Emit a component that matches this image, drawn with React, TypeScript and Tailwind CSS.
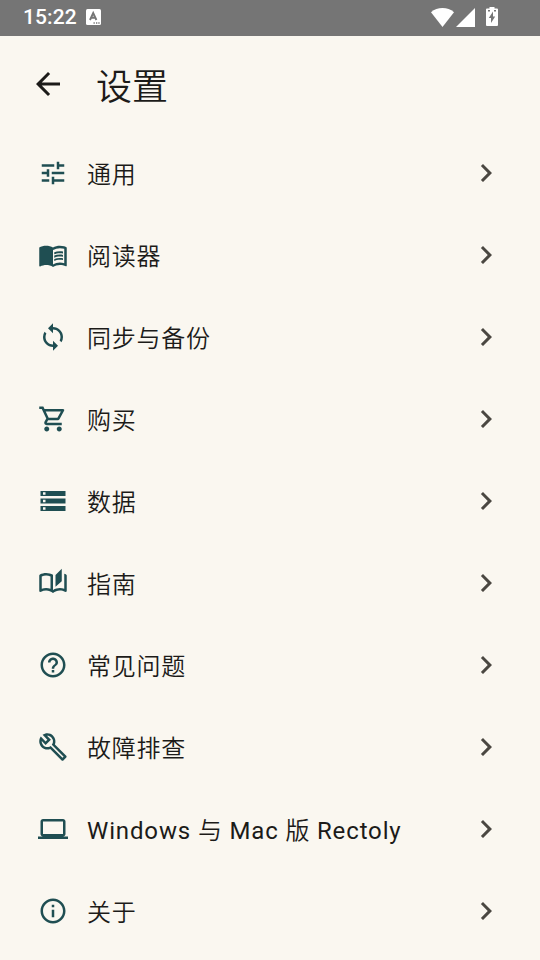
import type { IconType } from 'react-icons';
import {
  MdArrowBack,
  MdChevronRight,
  MdHelpOutline,
  MdInfoOutline,
  MdLaptop,
  MdMenuBook,
  MdOutlineAutoStories,
  MdOutlineBuild,
  MdOutlineShoppingCart,
  MdStorage,
  MdSync,
  MdTune,
} from 'react-icons/md';

const items: { label: string; Icon: IconType }[] = [
  { label: '通用', Icon: MdTune },
  { label: '阅读器', Icon: MdMenuBook },
  { label: '同步与备份', Icon: MdSync },
  { label: '购买', Icon: MdOutlineShoppingCart },
  { label: '数据', Icon: MdStorage },
  { label: '指南', Icon: MdOutlineAutoStories },
  { label: '常见问题', Icon: MdHelpOutline },
  { label: '故障排查', Icon: MdOutlineBuild },
  { label: 'Windows 与 Mac 版 Rectoly', Icon: MdLaptop },
  { label: '关于', Icon: MdInfoOutline },
];

// Latin runs use the regular weight, Chinese runs the lighter one.
function Label({ text }: { text: string }) {
  return (
    <span className="ml-[19px] mt-1 whitespace-pre text-[24px] font-[350] leading-9 tracking-[0.75px]">
      {text.split(/([A-Za-z ]+)/).filter(Boolean).map((run, i) =>
        /[A-Za-z]/.test(run) ? (
          <span key={i} className="font-normal tracking-[0.86px]">{run}</span>
        ) : (
          run
        ),
      )}
    </span>
  );
}

function StatusBar() {
  return (
    <div className="flex h-9 items-center bg-[#757575] pl-[23px] pr-[42px] text-white">
      <span className="text-[21px] font-medium leading-9 -mt-0.5 tracking-[0.1px]">15:22</span>
      <svg className="ml-[9px] -mt-0.5" width="15" height="16" viewBox="0 0 15 16">
        <rect width="15" height="16" rx="1.5" fill="#fff" />
        <path d="M4 11 7.200 4l3.200 7M5 8.700h4.500" fill="none" stroke="#757575" strokeWidth="1.900" />
        <path d="M7.500 14h1.300M10 14h1.300M12.300 14h1.300" stroke="#757575" strokeWidth="1.300" />
      </svg>
      <div className="-mt-0.5 ml-auto flex items-center">
        <svg width="23" height="20" viewBox="0 0 23 20">
          <path d="M0 5.200Q5 1 11.500 1T23 5.200L11.500 20Z" fill="#fff" />
        </svg>
        <svg className="ml-[2px]" width="19" height="20" viewBox="0 0 19 20">
          <path d="M19 1v19H0Z" fill="#fff" />
        </svg>
        <svg className="ml-[11px]" width="12" height="20" viewBox="0 0 12 20">
          <path d="M3.500 0h5v1.500H11a1 1 0 0 1 1 1V18a1 1 0 0 1-1 1H1a1 1 0 0 1-1-1V2.500a1 1 0 0 1 1-1h2.500Z" fill="#fff" />
          <path d="M7 4.500v5h2.200L5 16v-5H2.800ZM2 3h2v1.500H2ZM8 3h2v1.500H8Z" fill="#757575" />
        </svg>
      </div>
    </div>
  );
}

export default function App() {
  return (
    <div className="flex h-[960px] w-[540px] flex-col overflow-hidden bg-[#faf7f0] font-['Roboto','Noto_Sans_CJK_SC',sans-serif] text-[#1c1b19]">
      <StatusBar />
      <header className="flex h-24 items-center pl-[30px]">
        <MdArrowBack size={36} />
        <h1 className="ml-[30px] mt-2 text-[36px] font-[350] leading-[48px]">设置</h1>
      </header>
      <ul>
        {items.map(({ label, Icon }) => (
          <li key={label} className="flex h-[82px] items-center pl-[38px] pr-9">
            <Icon size={30} className="shrink-0 text-[#1f4e52]" />
            <Label text={label} />
            <MdChevronRight size={36} className="ml-auto shrink-0 text-[#4a4741]" />
          </li>
        ))}
      </ul>
    </div>
  );
}
